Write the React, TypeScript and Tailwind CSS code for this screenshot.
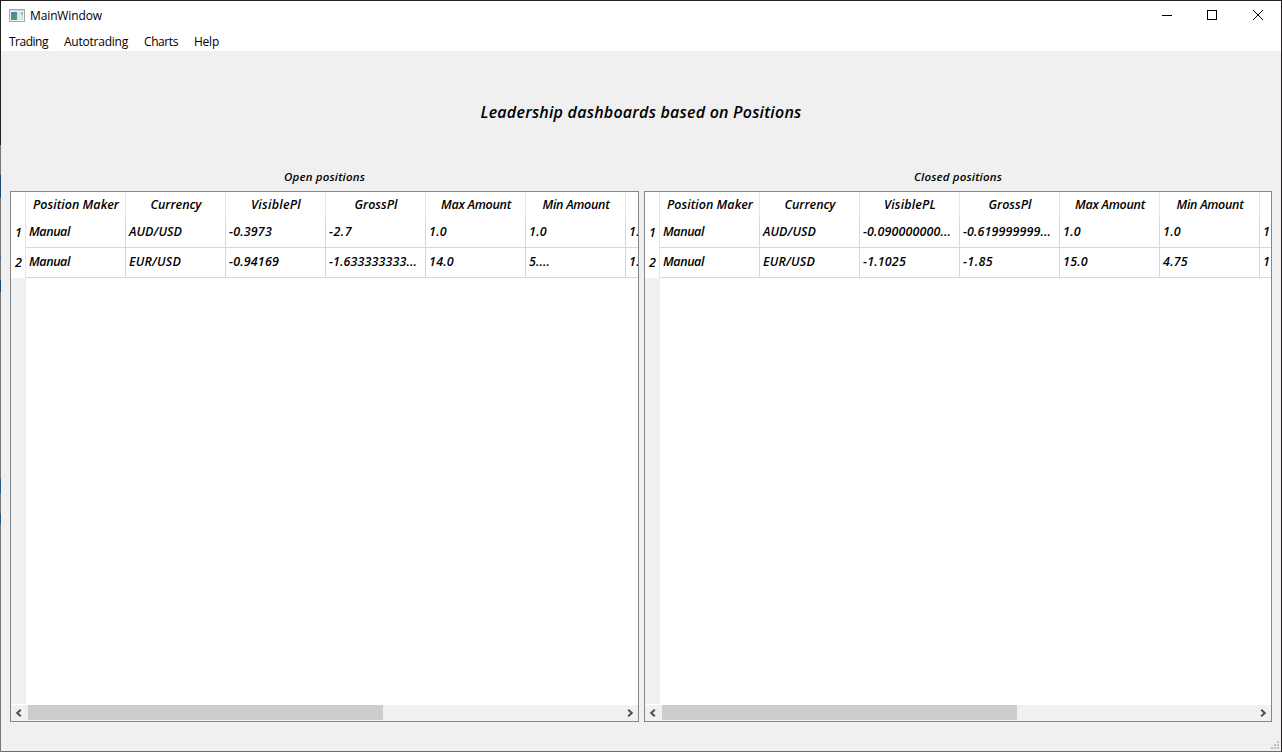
import { useLayoutEffect, useRef, useState } from "react";

type TextProps = { text: string; width: number; className?: string };

/** Text whose tracking is adjusted so that it occupies a given width. */
function FitText({ text, width, className = "" }: TextProps) {
  const ref = useRef<HTMLSpanElement>(null);
  const [spacing, setSpacing] = useState(0);
  useLayoutEffect(() => {
    if (!ref.current) return;
    const natural = ref.current.getBoundingClientRect().width - spacing * text.length;
    setSpacing((width - natural) / text.length);
  }, [text, width]);
  return (
    <span ref={ref} className={`inline-block shrink-0 whitespace-pre ${className}`} style={{ letterSpacing: `${spacing}px` }}>
      {text}
    </span>
  );
}

type Cell = [string, number];
type TableData = { headers: Cell[]; rows: Cell[][] };

const openPositions: TableData = {
  headers: [["Position Maker", 86], ["Currency", 51], ["VisiblePl", 50], ["GrossPl", 43], ["Max Amount", 70], ["Min Amount", 67]],
  rows: [
    [["Manual", 41], ["AUD/USD", 53], ["-0.3973", 43], ["-2.7", 23], ["1.0", 18], ["1.0", 18], ["1.0", 18]],
    [["Manual", 41], ["EUR/USD", 52], ["-0.94169", 50], ["-1.633333333...", 88], ["14.0", 25], ["5....", 21], ["1.0", 18]],
  ],
};

const closedPositions: TableData = {
  headers: [["Position Maker", 86], ["Currency", 51], ["VisiblePL", 52], ["GrossPl", 43], ["Max Amount", 70], ["Min Amount", 67]],
  rows: [
    [["Manual", 41], ["AUD/USD", 53], ["-0.090000000...", 88], ["-0.619999999...", 88], ["1.0", 18], ["1.0", 18], ["1", 7]],
    [["Manual", 41], ["EUR/USD", 52], ["-1.1025", 43], ["-1.85", 30], ["15.0", 25], ["4.75", 25], ["1", 7]],
  ],
};

function Arrow({ right = false }: { right?: boolean }) {
  return (
    <span className={`flex h-full w-[17px] shrink-0 items-center ${right ? "justify-end pr-1" : "pl-1"}`}>
      <svg width="7" height="8" viewBox="0 0 7 8" fill="none" stroke="#505050" strokeWidth="2">
        <path d={right ? "M1.2 0.7 L4.8 4 L1.2 7.3" : "M5.8 0.7 L2.2 4 L5.8 7.3"} />
      </svg>
    </span>
  );
}

function PositionsTable({ data, className }: { data: TableData; className: string }) {
  return (
    <div className={`flex h-[531px] flex-col overflow-hidden border border-[#828790] bg-white ${className}`}>
      <div className="flex h-[26px] shrink-0">
        <div className="w-[15px] shrink-0 border-r border-[#e5e5e5]" />
        {data.headers.map(([text, width]) => (
          <div key={text} className="flex w-[100px] shrink-0 items-center justify-center border-r border-[#e5e5e5] pl-px">
            <FitText text={text} width={width} />
          </div>
        ))}
        <div className="w-[100px] shrink-0" />
      </div>
      {data.rows.map((row, i) => (
        <div key={i} className="flex h-[30px] shrink-0">
          <div className="flex w-[15px] shrink-0 items-center justify-center border-r border-[#e5e5e5] pb-px pl-px">
            <FitText text={String(i + 1)} width={7} />
          </div>
          {row.map(([text, width], j) => (
            <div key={j} className="flex w-[100px] shrink-0 items-center border-r border-b border-[#d8d8d8] pb-[2px] pl-[3px]">
              <FitText text={text} width={width} />
            </div>
          ))}
        </div>
      ))}
      <div className="min-h-0 w-[15px] flex-1 bg-[#f0f0f0]" />
      <div className="mt-px flex h-4 shrink-0 bg-[#f0f0f0]">
        <Arrow />
        <div className="h-[15px] w-[355px] bg-[#cdcdcd]" />
        <div className="flex-1" />
        <Arrow right />
      </div>
    </div>
  );
}

function TitleBar() {
  return (
    <header className="flex h-[30px] shrink-0 items-center bg-white pl-2">
      <svg width="16" height="14" viewBox="0 0 16 14">
        <defs>
          <linearGradient id="pane" x1="0" y1="0" x2="0.6" y2="1">
            <stop offset="0" stopColor="#4f83b3" />
            <stop offset="1" stopColor="#4f9a77" />
          </linearGradient>
        </defs>
        <rect x="0.5" y="0.5" width="15" height="12" fill="#f0f2f3" stroke="#a3a9ae" />
        <rect x="1" y="1" width="14" height="1" fill="#cdd3d8" />
        <rect x="2" y="3" width="6" height="8" fill="url(#pane)" />
        <rect x="8" y="3" width="4" height="8" fill="#e3e6e8" />
        <rect x="12" y="3" width="2" height="3" fill="#9dbbd0" />
        <rect x="12" y="6" width="2" height="5" fill="#d3e3da" />
      </svg>
      <FitText text="MainWindow" width={72} className="ml-[5px]" />
      <div className="ml-auto flex h-full">
        <svg width="46" height="30" shapeRendering="crispEdges"><path d="M18 14.5h10" stroke="#000" /></svg>
        <svg width="45" height="30" shapeRendering="crispEdges"><rect x="17.5" y="9.5" width="9" height="9" fill="none" stroke="#000" /></svg>
        <svg width="46" height="30"><path d="M18 9l10 10M28 9L18 19" stroke="#000" strokeWidth="1" /></svg>
      </div>
    </header>
  );
}

const menu: Cell[] = [["Trading", 39], ["Autotrading", 64], ["Charts", 34], ["Help", 25]];

export default function App() {
  return (
    <div className="flex h-[752px] w-[1282px] overflow-hidden bg-[#f0f0f0] font-['Open_Sans','Noto_Sans',sans-serif] text-[12px] leading-[16px] text-black">
      <div className="flex w-px shrink-0 flex-col bg-[#777777]">
        <div className="h-[145px] bg-[#231f20]" />
        <div className="mt-[30px] h-[23px] bg-[#1c4a73]" />
        <div className="mt-[58px] h-1 bg-[#45708c]" />
        <div className="mt-[20px] h-[12px] bg-[#1c4a73]" />
        <div className="mt-[187px] h-[14px] bg-[#245a83]" />
        <div className="mt-[20px] h-[11px] bg-[#245a83]" />
      </div>
      <div className="flex flex-1 flex-col border-t border-r border-b border-t-[#231f20] border-r-[#231f20] border-b-[#6b6b6b]">
        <TitleBar />
        <nav className="flex h-5 shrink-0 items-center gap-4 bg-white pt-[2px] pl-2">
          {menu.map(([text, width]) => (
            <FitText key={text} text={text} width={width} />
          ))}
        </nav>
        <main className="flex flex-1 flex-col pl-[9px] font-semibold italic">
          <h1 className="flex h-[118px] w-[1262px] items-center justify-center pt-[4px] text-[16px] leading-5">
            <FitText text="Leadership dashboards based on Positions" width={321} />
          </h1>
          <div className="flex gap-[5px] text-[12.5px]">
            <section>
              <h2 className="flex h-[22px] items-center justify-center pb-[6px] text-[11.5px]">
                <FitText text="Open positions" width={81} />
              </h2>
              <PositionsTable data={openPositions} className="w-[629px]" />
            </section>
            <section>
              <h2 className="flex h-[22px] items-center justify-center pb-[6px] text-[11.5px]">
                <FitText text="Closed positions" width={88} />
              </h2>
              <PositionsTable data={closedPositions} className="w-[628px]" />
            </section>
          </div>
          <div className="mt-auto flex justify-end pr-[2px] pb-[2px]">
            <svg width="8" height="8" fill="#bfbfbf">
              <path d="M6 0h2v2h-2zM3 3h2v2h-2zM6 3h2v2h-2zM0 6h2v2h-2zM3 6h2v2h-2zM6 6h2v2h-2z" />
            </svg>
          </div>
        </main>
      </div>
    </div>
  );
}
